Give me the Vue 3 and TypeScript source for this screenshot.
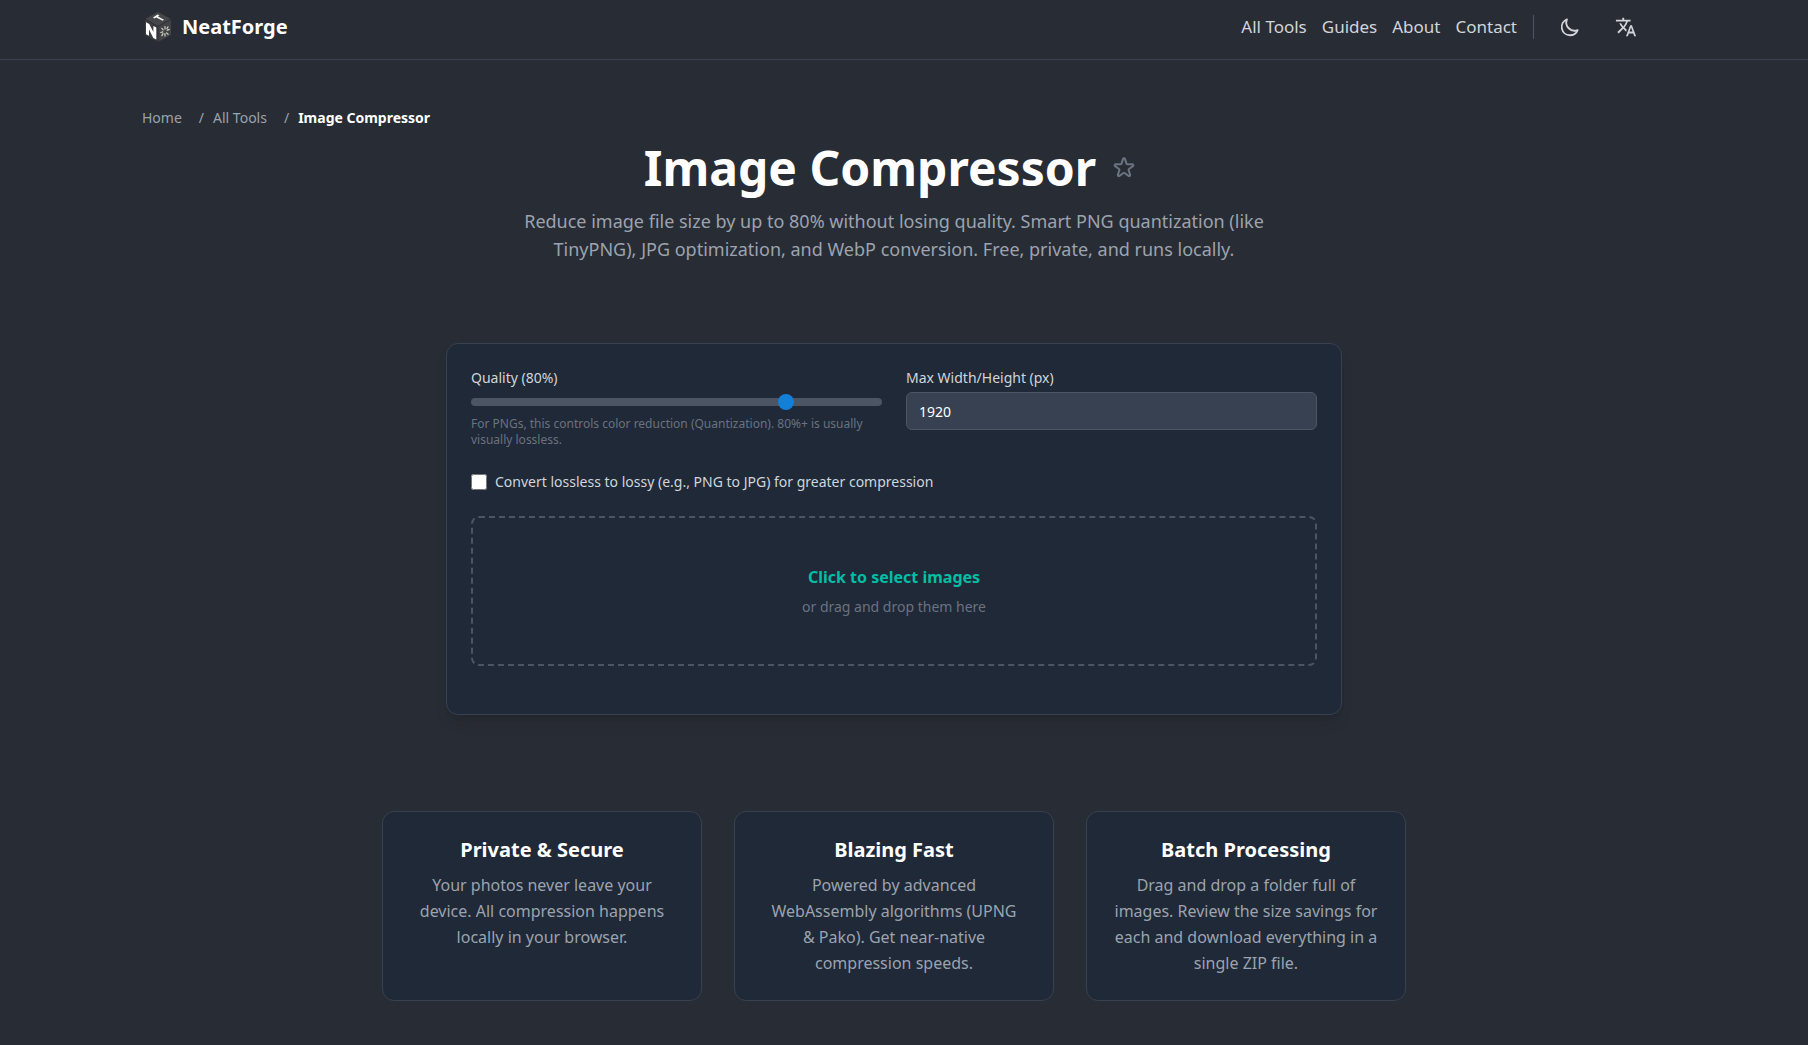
<script setup lang="ts">
import { ref } from 'vue'

interface Link {
  label: string
  href: string
}

interface Feature {
  title: string
  text: string
}

const navLinks: Link[] = [
  { label: 'All Tools', href: '#tools' },
  { label: 'Guides', href: '#guides' },
  { label: 'About', href: '#about' },
  { label: 'Contact', href: '#contact' },
]

const features: Feature[] = [
  {
    title: 'Private & Secure',
    text: 'Your photos never leave your device. All compression happens locally in your browser.',
  },
  {
    title: 'Blazing Fast',
    text: 'Powered by advanced WebAssembly algorithms (UPNG &\u00a0Pako). Get near-native compression speeds.',
  },
  {
    title: 'Batch Processing',
    text: 'Drag and drop a folder full of images. Review the size savings for each and download everything in a single ZIP file.',
  },
]

const quality = ref<number>(80)
const maxSize = ref<number>(1920)
const convertLossy = ref<boolean>(false)
const picker = ref<HTMLInputElement | null>(null)
</script>

<template>
  <div class="page">
    <header class="header">
      <div class="container header-row">
        <a class="brand" href="#home">
          <svg class="brand-mark" viewBox="0 0 32 32" aria-hidden="true">
            <path d="M16 1 29 8 16 15.500 3 8z" fill="#45464a" />
            <path d="M3 8 16 15.500V31L3 24z" fill="#3b3c40" />
            <path d="M29 8 16 15.500V31l13-7z" fill="#424347" />
            <path d="M3 8l13 7.500L29 8M16 15.500V31" fill="none" stroke="#2a2c31" stroke-width="0.800" />
            <path d="M11 6.500 15.500 3.500 17.500 4.300 16 5.600 22 8.800 20.600 9.800 14.300 6.500 12.500 7.500z" fill="#f4f5f5" />
            <path d="M4 11.200l3.200 1.700 4.200 8V15l2.900 1.500V28.500l-3-1.600-4.300-8.300v6.200L4 23.300z" fill="#fff" />
            <g stroke="#d3d0c4" stroke-width="1.200" stroke-linecap="round">
              <path d="M23 15.500v2.500M23 22.500v2.500M18.800 21.500l2-.6M25.200 19.300l2-.9M19.800 17.300l1.400 1.500M24.600 21.800l1.500 1.500M26 15.800l-1.100 2M21 22.600l-1.100 2" />
            </g>
          </svg>
          <span>NeatForge</span>
        </a>
        <div class="header-end">
          <nav class="nav" aria-label="Main">
            <a v-for="link in navLinks" :key="link.label" :href="link.href">{{ link.label }}</a>
          </nav>
          <span class="divider"></span>
          <button class="icon-button" type="button" aria-label="Toggle dark mode">
            <svg viewBox="0 0 24 24" fill="none" stroke="currentColor" stroke-width="2" stroke-linecap="round" stroke-linejoin="round">
              <path d="M20.354 15.354A9 9 0 018.646 3.646 9.003 9.003 0 0012 21a9.003 9.003 0 008.354-5.646z" />
            </svg>
          </button>
          <button class="icon-button" type="button" aria-label="Change language">
            <svg viewBox="0 0 24 24" fill="currentColor">
              <path d="M12.870 15.070l-2.540-2.510.030-.030A17.520 17.520 0 0014.070 6H17V4h-7V2H8v2H1v1.990h11.170C11.500 7.920 10.440 9.750 9 11.350 8.070 10.320 7.300 9.190 6.690 8h-2c.730 1.630 1.730 3.170 2.980 4.560l-5.090 5.020L4 19l5-5 3.110 3.110.760-2.040zM18.500 10h-2L12 22h2l1.120-3h4.750L21 22h2l-4.500-12zm-2.620 7l1.620-4.330L19.120 17h-3.240z" />
            </svg>
          </button>
        </div>
      </div>
    </header>

    <main class="container main">
      <nav aria-label="Breadcrumb">
        <ol class="breadcrumb">
          <li><a href="#home">Home</a></li>
          <li><a href="#tools">All Tools</a></li>
          <li class="current" aria-current="page">Image Compressor</li>
        </ol>
      </nav>

      <section class="hero">
        <div class="title-row">
          <h1>Image Compressor</h1>
          <button class="star" type="button" aria-label="Add to favorites">
            <svg viewBox="0 0 24 24" fill="none" stroke="currentColor" stroke-width="2" stroke-linecap="round" stroke-linejoin="round">
              <path d="M11.049 2.927c.300-.921 1.603-.921 1.902 0l1.519 4.674a1 1 0 00.950.690h4.915c.969 0 1.371 1.240.588 1.810l-3.976 2.888a1 1 0 00-.363 1.118l1.518 4.674c.300.922-.755 1.688-1.538 1.118l-3.976-2.888a1 1 0 00-1.176 0l-3.976 2.888c-.783.570-1.838-.197-1.538-1.118l1.518-4.674a1 1 0 00-.363-1.118l-3.976-2.888c-.784-.570-.380-1.810.588-1.810h4.914a1 1 0 00.951-.690l1.519-4.674z" />
            </svg>
          </button>
        </div>
        <p>
          Reduce image file size by up to 80% without losing quality. Smart PNG quantization (like
          TinyPNG), JPG optimization, and WebP conversion. Free, private, and runs locally.
        </p>
      </section>

      <section class="tool">
        <div class="options">
          <div class="field">
            <label for="quality">Quality ({{ quality }}%)</label>
            <input id="quality" v-model.number="quality" class="range" type="range" min="10" max="100" />
            <p class="hint">
              For PNGs, this controls color reduction (Quantization). 80%+ is usually visually lossless.
            </p>
          </div>
          <div class="field">
            <label for="max-size">Max Width/Height (px)</label>
            <input id="max-size" v-model.number="maxSize" class="number" type="number" />
          </div>
        </div>
        <div class="check">
          <input id="lossy" v-model="convertLossy" type="checkbox" />
          <label for="lossy">Convert lossless to lossy (e.g., PNG to JPG) for greater compression</label>
        </div>
        <button class="dropzone" type="button" @click="picker?.click()">
          <span class="drop-title">Click to select images</span>
          <span class="drop-text">or drag and drop them here</span>
        </button>
        <input ref="picker" type="file" accept="image/*" multiple hidden />
      </section>

      <section class="features">
        <article v-for="feature in features" :key="feature.title" class="feature">
          <h2>{{ feature.title }}</h2>
          <p>{{ feature.text }}</p>
        </article>
      </section>
    </main>
  </div>
</template>

<style>
body {
  margin: 0;
  background: #282c34;
}
</style>

<style scoped>
.page {
  min-height: 100vh;
  background: #282c34;
  color: #d1d5db;
  font-family: 'Segoe UI', 'Noto Sans', 'Open Sans', sans-serif;
  font-size: 16px;
  line-height: 26px;
}

.page *,
.page *::before {
  box-sizing: border-box;
}

h1,
h2,
p,
ol {
  margin: 0;
  padding: 0;
}

a {
  color: inherit;
  text-decoration: none;
}

button,
input {
  font-family: inherit;
}

button {
  border: 0;
  padding: 0;
  background: none;
  color: inherit;
  cursor: pointer;
}

.header {
  border-bottom: 1px solid #374151;
  padding: 0 20px 5px 0;
}

.container {
  box-sizing: border-box;
  max-width: 1536px;
  margin: 0 auto;
  padding: 0 16px;
}

.header-row {
  display: flex;
  align-items: center;
  justify-content: space-between;
  height: 54px;
}

.brand {
  display: flex;
  align-items: center;
  gap: 8px;
  color: #fff;
  font-size: 20px;
  font-weight: 700;
}

.brand-mark {
  width: 32px;
  height: 32px;
}

.header-end {
  display: flex;
  align-items: center;
}

.nav {
  display: flex;
  gap: 15px;
  font-size: 17px;
}

.divider {
  width: 1px;
  height: 24px;
  margin: 0 16px;
  background: #4b5563;
}

.icon-button {
  display: grid;
  place-items: center;
  width: 40px;
  height: 40px;
}

.icon-button + .icon-button {
  margin-left: 16px;
}

.icon-button svg {
  width: 22px;
  height: 22px;
}

.main {
  max-width: 1556px;
  padding: 48px 36px 32px 16px;
}

.breadcrumb {
  display: flex;
  list-style: none;
  color: #9ca3af;
  font-size: 14px;
  line-height: 20px;
}

.breadcrumb li + li::before {
  content: '/';
  margin: 0 9px 0 17px;
}

.breadcrumb .current {
  color: #fff;
  font-weight: 700;
}

.breadcrumb .current::before {
  color: #9ca3af;
  font-weight: 400;
}

.hero {
  max-width: 768px;
  margin: 8px auto 80px;
  text-align: center;
}

.title-row {
  display: flex;
  align-items: center;
  justify-content: center;
  gap: 8px;
  height: 63px;
}

h1 {
  color: #fff;
  font-size: 48px;
  line-height: 60px;
  font-weight: 700;
}

.star {
  display: grid;
  place-items: center;
  width: 40px;
  height: 40px;
  color: #6b7280;
}

.star svg {
  width: 24px;
  height: 24px;
}

.hero p {
  margin-top: 8px;
  color: #9ca3af;
  font-size: 18px;
  line-height: 28px;
}

.tool {
  max-width: 896px;
  margin: 0 auto;
  padding: 24px 24px 48px;
  border: 1px solid #374151;
  border-radius: 12px;
  background: #1f2937;
  box-shadow: 0 10px 15px -3px rgba(0, 0, 0, 0.1), 0 4px 6px -4px rgba(0, 0, 0, 0.1);
  font-size: 14px;
  line-height: 20px;
}

.options {
  display: grid;
  grid-template-columns: 1fr 1fr;
  gap: 24px;
}

.field label {
  display: block;
}

.range {
  display: block;
  width: 100%;
  height: 8px;
  margin: 10px 0;
  border-radius: 8px;
  background: #4b5563;
  appearance: none;
}

.range::-webkit-slider-thumb {
  width: 16px;
  height: 16px;
  border-radius: 50%;
  background: #137fd6;
  appearance: none;
}

.hint {
  color: #6b7280;
  font-size: 12px;
  line-height: 16px;
}

.number {
  display: block;
  width: 100%;
  height: 38px;
  margin: 4px 0 0;
  padding: 0 12px;
  border: 1px solid #4b5563;
  border-radius: 6px;
  background: #374151;
  color: #fff;
  font-size: 14px;
  appearance: textfield;
}

.check {
  display: flex;
  align-items: center;
  gap: 8px;
  margin: 24px 0;
}

.check input {
  width: 16px;
  height: 16px;
  margin: 0;
}

.dropzone {
  display: flex;
  flex-direction: column;
  align-items: center;
  justify-content: center;
  gap: 8px;
  width: 100%;
  height: 150px;
  border: 2px dashed #4b5563;
  border-radius: 8px;
}

.drop-title {
  color: #00bfa5;
  font-size: 16px;
  line-height: 24px;
  font-weight: 700;
}

.drop-text {
  color: #6b7280;
  font-size: 14px;
  line-height: 20px;
}

.features {
  display: grid;
  grid-template-columns: repeat(3, 1fr);
  gap: 32px;
  max-width: 1024px;
  margin: 96px auto 0;
}

.feature {
  padding: 24px;
  border: 1px solid #374151;
  border-radius: 12px;
  background: #1f2937;
  text-align: center;
}

.feature h2 {
  margin-bottom: 8px;
  color: #fff;
  font-size: 20px;
  line-height: 28px;
  font-weight: 700;
}

.feature p {
  color: #9ca3af;
  font-size: 16px;
}
</style>
